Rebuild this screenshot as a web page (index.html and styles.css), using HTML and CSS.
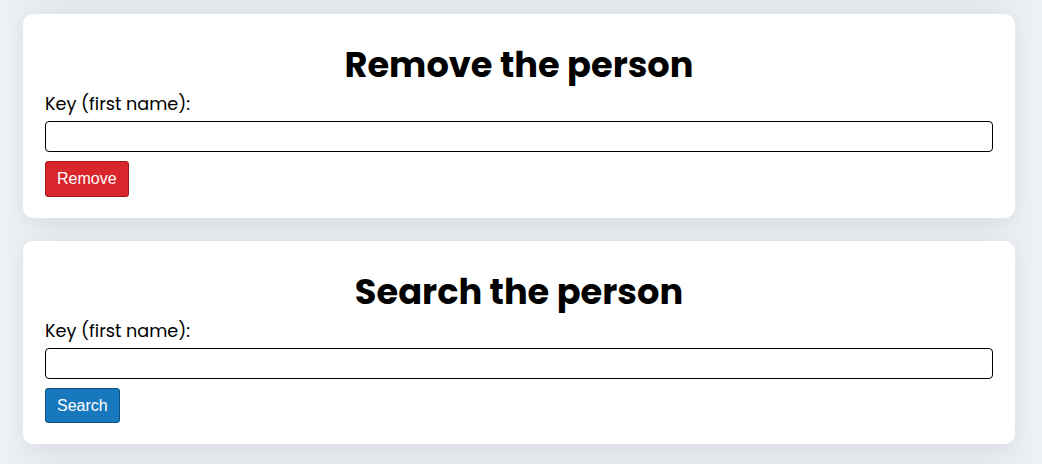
FILE: index.html
```html
<!DOCTYPE html>
<html>
<head>
<meta charset="utf-8">
<link rel="stylesheet" href="styles.css">
</head>
<body>
<main class="page">
  <section class="card">
    <h2 class="title">Remove the person</h2>
    <label class="label" for="k1">Key (first name):</label>
    <input class="field" id="k1" type="text">
    <button class="btn btn-red">Remove</button>
  </section>
  <section class="card">
    <h2 class="title">Search the person</h2>
    <label class="label" for="k2">Key (first name):</label>
    <input class="field" id="k2" type="text">
    <button class="btn btn-blue">Search</button>
  </section>
</main>
</body>
</html>
```
FILE: styles.css
```css
html, body {
  margin: 0;
  padding: 0;
}
body {
  background: linear-gradient(90deg, #edf0f4 0%, #e5e8ed 6%, #e5e8ed 94%, #edf0f4 100%);
  font-family: "Poppins", "Inter", "Noto Sans", sans-serif;
  height: 464px;
  overflow: hidden;
}
.page {
  display: flex;
  flex-direction: column;
  gap: 23px;
  padding: 14px 27px 0 23px;
}
.card {
  background: #fff;
  border-radius: 10px;
  box-shadow: 0 4px 18px rgba(40, 60, 90, 0.06);
  padding: 27px 22px 21px;
  display: flex;
  flex-direction: column;
  align-items: flex-start;
}
.title {
  align-self: stretch;
  text-align: center;
  margin: 0 0 3px;
  font-size: 35.2px;
  font-weight: 700;
  line-height: 48px;
  color: #000;
}
.label {
  font-size: 17.6px;
  line-height: 24px;
  color: #000;
  margin-bottom: 5px;
}
.field {
  box-sizing: border-box;
  width: 100%;
  height: 31px;
  border: 1px solid #000;
  border-radius: 4px;
  margin: 0 0 9px;
  padding: 0 6px;
  font-size: 16px;
  background: #fff;
}
.btn {
  font-family: "Liberation Sans", Arial, sans-serif;
  font-size: 16px;
  color: #fff;
  height: 36px;
  padding: 0 11px;
  border-radius: 3px;
  cursor: pointer;
}
.btn-red {
  background: #d8262c;
  border: 1px solid #a11a1f;
}
.btn-blue {
  background: #1878bd;
  border: 1px solid #0f4f80;
  height: 35px;
}
```
